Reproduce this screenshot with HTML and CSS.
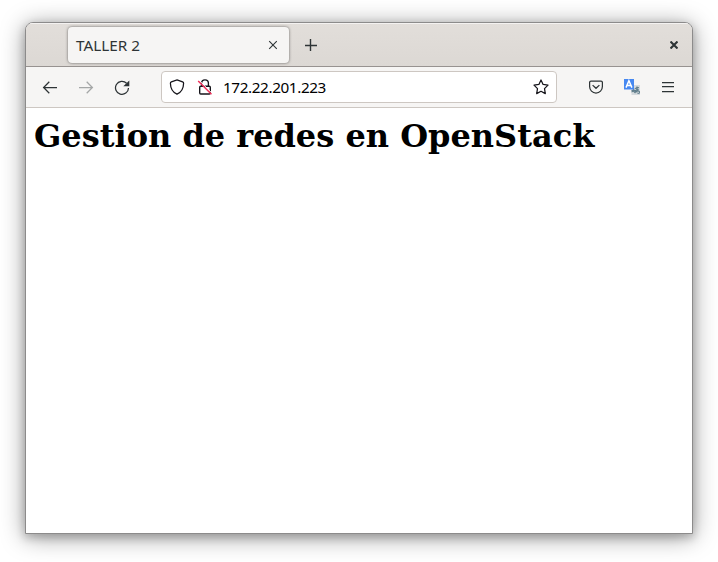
FILE: index.html
```html
<!DOCTYPE html>
<html lang="es">
<head>
<meta charset="utf-8">
<title>TALLER 2</title>
<link rel="stylesheet" href="styles.css">
</head>
<body>
<div class="window">
  <header class="tabbar">
    <div class="tab">
      <span class="tab-title">TALLER 2</span>
      <svg class="tab-close" width="10" height="10" viewBox="0 0 10 10"><path d="M1.2 1.2l7.6 7.6M8.8 1.2L1.2 8.8"/></svg>
    </div>
    <svg class="new-tab" width="12" height="12" viewBox="0 0 12 12"><path d="M5.500 0v12M0 6.500h12"/></svg>
    <svg class="window-close" width="8" height="8" viewBox="0 0 8 8"><path d="M.5.5l7 7M7.5.5l-7 7"/></svg>
  </header>
  <nav class="toolbar">
    <svg class="icon" viewBox="0 0 16 16"><path d="M15 8.500H1.6M7.3 2.800L1.6 8.500l5.7 5.7"/></svg>
    <svg class="icon disabled" viewBox="0 0 16 16"><path d="M1 8.500h13.400M8.700 2.800l5.700 5.700-5.700 5.700"/></svg>
    <svg class="icon" viewBox="0 0 16 16"><path d="M12.6 4.200A6.500 6.500 0 1 0 14.500 9"/><path class="solid" d="M15.300 1.500v5.700H9.300z"/></svg>
    <div class="urlbar">
      <svg class="icon shield" viewBox="0 0 16 16"><path d="M8 .9l5.6 2c.7.3 1 .7 1 1.4C14.5 9.500 12 13.500 8 15.200 4 13.500 1.500 9.500 1.400 4.300c0-.7.3-1.100 1-1.400z"/></svg>
      <svg class="icon lock" viewBox="0 0 16 16"><path d="M4.600 7V4.300a3.400 3.400 0 0 1 6.800 0V7M3.700 7.200h8.600q1 0 1 1v5.800q0 1-1 1H3.700q-1 0-1-1V8.200q0-1 1-1z"/><path class="gap" d="M2.200 1.400l13.300 13.300"/><path class="slash" d="M1.200 2l13.300 13.300"/></svg>
      <span class="address">172.22.201.223</span>
      <svg class="icon star" viewBox="0 0 16 16"><path d="M8 1l2.100 4.400 4.900.7-3.500 3.500.8 5L8 12.300l-4.300 2.300.8-5L1 6.100l4.900-.7z"/></svg>
    </div>
    <svg class="icon" viewBox="0 0 16 16"><path d="M3 2.200h10q1.400 0 1.400 1.400v4A6.400 6.400 0 0 1 1.600 7.600v-4q0-1.400 1.400-1.400zM4.600 6.100L8 9.300l3.400-3.200"/></svg>
    <svg class="icon translate" viewBox="0 0 16 16"><path class="sheet" d="M10 6h6v10H7.500V10.500z"/><path class="glyph" d="M7.500 11.500h4M9.500 9q1 3-2 4M8.500 11l3 3M11 9.500l4-1M13 7.500v6M14.500 10q-3 4-3 2t3 0-1 2.500"/><path class="blue" d="M0 0h10v10.500H0z"/><path class="letter" d="M2 8.600L4.900 1.700 7.900 8.600M3 6.400h4"/></svg>
    <svg class="icon" viewBox="0 0 16 16"><path d="M2 3.500h12M2 7.500h12M2 12.500h12"/></svg>
  </nav>
  <main class="page"><h1>Gestion de redes en OpenStack</h1></main>
</div>
</body>
</html>
```

FILE: styles.css
```css
* { box-sizing: border-box; }
body {
  margin: 0;
  padding: 22px 25px 28px;
  height: 562px;
  background: #fff;
  font-family: "Noto Sans", sans-serif;
  overflow: hidden;
}
.window {
  width: 668px;
  height: 512px;
  display: flex;
  flex-direction: column;
  border: 1px solid #8c8b8b;
  border-radius: 8px 8px 0 0;
  background: #fff;
  overflow: hidden;
  box-shadow: 0 3px 9px 1px rgba(0, 0, 0, .18), 0 3px 24px rgba(0, 0, 0, .4);
}
svg { display: block; flex: none; fill: none; stroke: #2e3436; stroke-width: 1.25; }
.tabbar {
  height: 44px;
  flex: none;
  display: flex;
  align-items: center;
  padding: 0 14px 0 42px;
  background: linear-gradient(#e2deda, #dcd8d4);
  border-bottom: 1px solid #979290;
  box-shadow: inset 0 1px #f4f2f1;
}
.tab {
  width: 221px;
  height: 36px;
  display: flex;
  align-items: center;
  justify-content: space-between;
  padding: 0 11px 0 8px;
  border-radius: 4px;
  background: #f6f5f4;
  box-shadow: 0 0 3px rgba(0, 0, 0, .55);
}
.tab-title { font-size: 15.3px; line-height: 20px; color: #2e3436; }
.tab-close { stroke-width: 1.1; }
.new-tab { margin-left: 16px; stroke-width: 1.4; }
.window-close { margin-left: auto; stroke-width: 2.1; }
.toolbar {
  height: 41px;
  flex: none;
  display: flex;
  align-items: center;
  gap: 20px;
  padding: 0 16px;
  background: #f6f5f4;
  border-bottom: 1px solid #cdc7c2;
}
.icon { width: 16px; height: 16px; }
.disabled { opacity: .4; }
.urlbar {
  width: 396px;
  height: 32px;
  margin: 0 11px;
  padding: 0 7px;
  display: flex;
  align-items: center;
  border: 1px solid #cdc7c2;
  border-radius: 4px;
  background: #fff;
}
.urlbar .icon { stroke: #15141a; }
.address { margin-left: 10px; font-size: 15.3px; line-height: 20px; letter-spacing: -.4px; color: #000; }
.lock { margin-left: 12px; }
.star { margin-left: auto; stroke-linejoin: round; }
.solid { fill: #2e3436; stroke: none; }
.urlbar .lock { stroke-width: 1.35; }
.lock .gap { stroke: #fff; stroke-width: 1; }
.lock .slash { stroke: #f0305a; stroke-width: 1.5; }
.translate .sheet { fill: #d5dadd; stroke: none; }
.translate .glyph { stroke: #607d8b; stroke-width: 1.2; }
.translate .blue { fill: #4688f1; stroke: none; }
.translate .letter { stroke: #fff; stroke-width: 1.5; }
.page { flex: 1; padding: 9px 8px 8px; }
h1 { margin: 0; font: bold 32px/38px "DejaVu Serif", serif; color: #000; white-space: nowrap; }
```
